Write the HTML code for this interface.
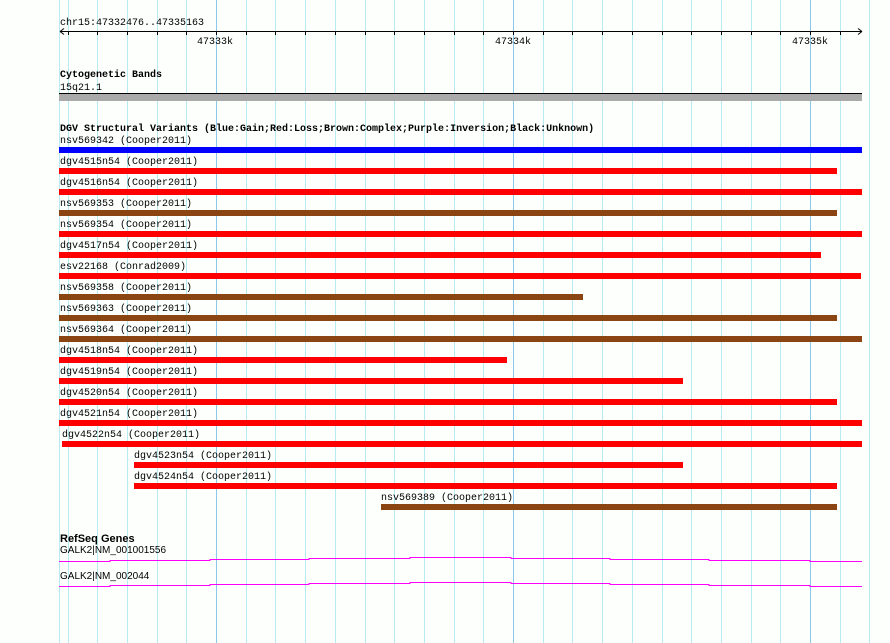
<!DOCTYPE html>
<html><head><style>html,body{margin:0;padding:0;background:#fdfffd;width:890px;height:643px;overflow:hidden}svg{display:block}text{font-family:"Liberation Mono","DejaVu Sans Mono",monospace;font-size:10px;fill:#000}.n{font-family:"Liberation Sans Narrow","Liberation Sans",sans-serif}</style></head><body>
<svg width="890" height="643" xmlns="http://www.w3.org/2000/svg">
<rect width="890" height="643" fill="#fdfffd"/>
<path stroke="#b8eaf2" fill="none" d="M59.5 0V643M68.5 0V643M97.5 0V643M127.5 0V643M157.5 0V643M186.5 0V643M246.5 0V643M275.5 0V643M305.5 0V643M335.5 0V643M365.5 0V643M394.5 0V643M424.5 0V643M454.5 0V643M483.5 0V643M543.5 0V643M572.5 0V643M602.5 0V643M632.5 0V643M662.5 0V643M691.5 0V643M721.5 0V643M751.5 0V643M780.5 0V643M840.5 0V643M869.5 0V643"/>
<path stroke="#8cc8ea" fill="none" d="M216.5 0V643M513.5 0V643M810.5 0V643"/>
<text x="60" y="25">chr15:47332476..47335163</text>
<line x1="60" y1="31.5" x2="862" y2="31.5" stroke="#000"/>
<path d="M60 31.5 L64 28.5 M60 31.5 L64 34.5 M862 31.5 L858 28.5 M862 31.5 L858 34.5" stroke="#000" fill="none"/>
<path stroke="#000" fill="none" d="M68.5 31V35M97.5 31V35M127.5 31V35M157.5 31V35M186.5 31V35M216.5 31V35M246.5 31V35M275.5 31V35M305.5 31V35M335.5 31V35M365.5 31V35M394.5 31V35M424.5 31V35M454.5 31V35M483.5 31V35M513.5 31V35M543.5 31V35M572.5 31V35M602.5 31V35M632.5 31V35M662.5 31V35M691.5 31V35M721.5 31V35M751.5 31V35M780.5 31V35M810.5 31V35M840.5 31V35"/>
<text x="197" y="44">47333k</text>
<text x="495" y="44">47334k</text>
<text x="792" y="44">47335k</text>
<text x="60" y="77" font-weight="bold">Cytogenetic Bands</text>
<text x="60" y="90">15q21.1</text>
<rect x="59" y="93" width="803" height="8" fill="#aaaaaa"/>
<line x1="59" y1="93.5" x2="862" y2="93.5" stroke="#000"/>
<text x="60" y="131" font-weight="bold">DGV Structural Variants (Blue:Gain;Red:Loss;Brown:Complex;Purple:Inversion;Black:Unknown)</text>
<text x="60" y="143">nsv569342 (Cooper2011)</text><rect x="59" y="147" width="803" height="6" fill="#0000ff"/>
<text x="60" y="164">dgv4515n54 (Cooper2011)</text><rect x="59" y="168" width="778" height="6" fill="#ff0000"/>
<text x="60" y="185">dgv4516n54 (Cooper2011)</text><rect x="59" y="189" width="803" height="6" fill="#ff0000"/>
<text x="60" y="206">nsv569353 (Cooper2011)</text><rect x="59" y="210" width="778" height="6" fill="#8b4513"/>
<text x="60" y="227">nsv569354 (Cooper2011)</text><rect x="59" y="231" width="803" height="6" fill="#ff0000"/>
<text x="60" y="248">dgv4517n54 (Cooper2011)</text><rect x="59" y="252" width="762" height="6" fill="#ff0000"/>
<text x="60" y="269">esv22168 (Conrad2009)</text><rect x="59" y="273" width="802" height="6" fill="#ff0000"/>
<text x="60" y="290">nsv569358 (Cooper2011)</text><rect x="59" y="294" width="524" height="6" fill="#8b4513"/>
<text x="60" y="311">nsv569363 (Cooper2011)</text><rect x="59" y="315" width="778" height="6" fill="#8b4513"/>
<text x="60" y="332">nsv569364 (Cooper2011)</text><rect x="59" y="336" width="803" height="6" fill="#8b4513"/>
<text x="60" y="353">dgv4518n54 (Cooper2011)</text><rect x="59" y="357" width="448" height="6" fill="#ff0000"/>
<text x="60" y="374">dgv4519n54 (Cooper2011)</text><rect x="59" y="378" width="624" height="6" fill="#ff0000"/>
<text x="60" y="395">dgv4520n54 (Cooper2011)</text><rect x="59" y="399" width="778" height="6" fill="#ff0000"/>
<text x="60" y="416">dgv4521n54 (Cooper2011)</text><rect x="59" y="420" width="803" height="6" fill="#ff0000"/>
<text x="62" y="437">dgv4522n54 (Cooper2011)</text><rect x="62" y="441" width="800" height="6" fill="#ff0000"/>
<text x="134" y="458">dgv4523n54 (Cooper2011)</text><rect x="134" y="462" width="549" height="6" fill="#ff0000"/>
<text x="134" y="479">dgv4524n54 (Cooper2011)</text><rect x="134" y="483" width="703" height="6" fill="#ff0000"/>
<text x="381" y="500">nsv569389 (Cooper2011)</text><rect x="381" y="504" width="456" height="6" fill="#8b4513"/>
<text x="60" y="542" font-weight="bold" class="n" style="font-size:11px">RefSeq Genes</text>
<text x="60" y="553" class="n">GALK2|NM_001001556</text>
<text x="60" y="579" class="n">GALK2|NM_002044</text>
<path d="M59 561.5H110V560.5H210V559.5H309V558.5H410V557.5H511V558.5H610V559.5H709V560.5H810V561.5H862" stroke="#ff00ff" fill="none"/>
<path d="M59 586.5H110V585.5H210V584.5H309V583.5H410V582.5H511V583.5H610V584.5H709V585.5H810V586.5H862" stroke="#ff00ff" fill="none"/>
</svg>
</body></html>
